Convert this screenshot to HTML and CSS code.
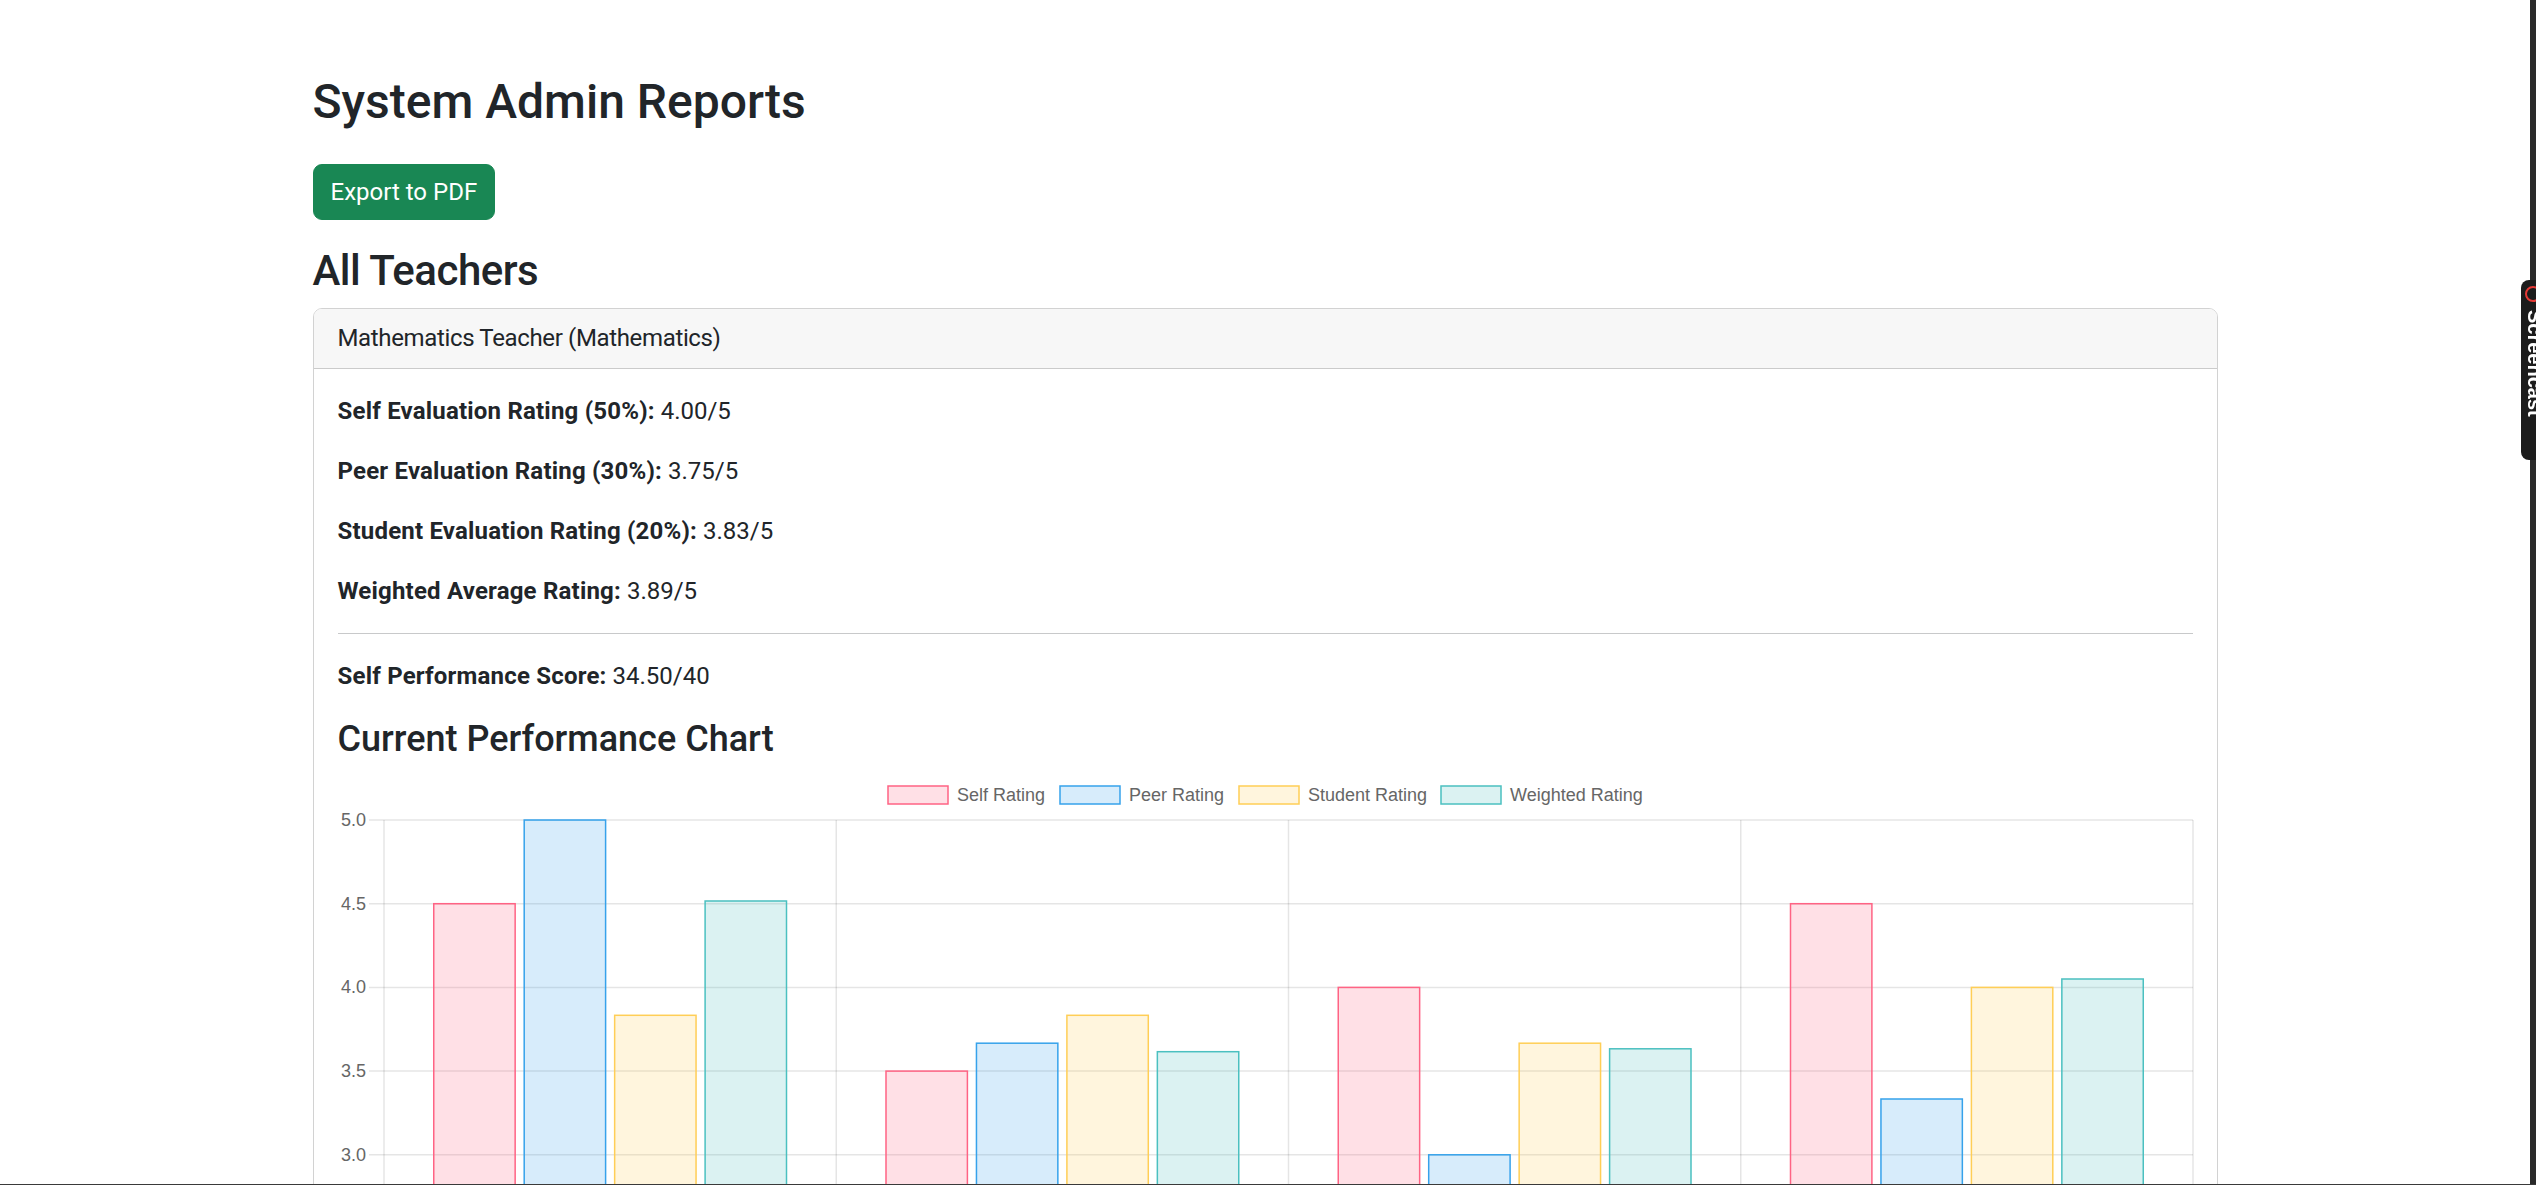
FILE: index.html
```html
<!DOCTYPE html>
<html lang="en">
<head>
<meta charset="utf-8">
<title>System Admin Reports</title>
<link rel="stylesheet" href="styles.css">
</head>
<body>
<div class="page">
  <div class="container">
    <h2 class="title">System Admin Reports</h2>
    <button class="btn-export" type="button">Export to PDF</button>
    <h3 class="section-title">All Teachers</h3>
    <div class="card">
      <div class="card-header">Mathematics Teacher (Mathematics)</div>
      <div class="card-body">
        <p><strong>Self Evaluation Rating (50%):</strong> 4.00/5</p>
        <p><strong>Peer Evaluation Rating (30%):</strong> 3.75/5</p>
        <p><strong>Student Evaluation Rating (20%):</strong> 3.83/5</p>
        <p><strong>Weighted Average Rating:</strong> 3.89/5</p>
        <hr class="divider">
        <p><strong>Self Performance Score:</strong> 34.50/40</p>
        <h4 class="chart-title">Current Performance Chart</h4>
        <div class="chart-wrap">
          <svg class="chart" width="1857" height="420" viewBox="0 0 1857 420" xmlns="http://www.w3.org/2000/svg">
            <g class="legend">
              <rect x="550" y="15" width="60" height="18" fill="rgba(255,99,132,0.2)" stroke="rgb(255,99,132)" stroke-width="1.5"/>
              <text x="619" y="24">Self Rating</text>
              <rect x="722" y="15" width="60" height="18" fill="rgba(54,162,235,0.2)" stroke="rgb(54,162,235)" stroke-width="1.5"/>
              <text x="791" y="24">Peer Rating</text>
              <rect x="901" y="15" width="60" height="18" fill="rgba(255,206,86,0.2)" stroke="rgb(255,206,86)" stroke-width="1.5"/>
              <text x="970" y="24">Student Rating</text>
              <rect x="1103" y="15" width="60" height="18" fill="rgba(75,192,192,0.2)" stroke="rgb(75,192,192)" stroke-width="1.5"/>
              <text x="1172" y="24">Weighted Rating</text>
            </g>
            <g class="grid" stroke="rgba(0,0,0,0.1)" stroke-width="1.5">
              <line x1="31" y1="49" x2="1855" y2="49"/>
              <line x1="31" y1="132.7" x2="1855" y2="132.7"/>
              <line x1="31" y1="216.4" x2="1855" y2="216.4"/>
              <line x1="31" y1="300.1" x2="1855" y2="300.1"/>
              <line x1="31" y1="383.8" x2="1855" y2="383.8"/>
              <line x1="46" y1="49" x2="46" y2="420"/>
              <line x1="498.25" y1="49" x2="498.25" y2="420"/>
              <line x1="950.5" y1="49" x2="950.5" y2="420"/>
              <line x1="1402.75" y1="49" x2="1402.75" y2="420"/>
              <line x1="1855" y1="49" x2="1855" y2="420"/>
            </g>
            <g class="ticks">
              <text x="28" y="49">5.0</text>
              <text x="28" y="132.7">4.5</text>
              <text x="28" y="216.4">4.0</text>
              <text x="28" y="300.1">3.5</text>
              <text x="28" y="383.8">3.0</text>
            </g>
            <g class="bars" stroke-width="1.5">
              <rect x="95.75" y="132.7" width="81.4" height="753.3" fill="rgba(255,99,132,0.2)" stroke="rgb(255,99,132)"/>
              <rect x="186.2" y="49" width="81.4" height="837" fill="rgba(54,162,235,0.2)" stroke="rgb(54,162,235)"/>
              <rect x="276.65" y="244.3" width="81.4" height="641.7" fill="rgba(255,206,86,0.2)" stroke="rgb(255,206,86)"/>
              <rect x="367.1" y="130" width="81.4" height="756" fill="rgba(75,192,192,0.2)" stroke="rgb(75,192,192)"/>

              <rect x="548" y="300.1" width="81.4" height="585.9" fill="rgba(255,99,132,0.2)" stroke="rgb(255,99,132)"/>
              <rect x="638.45" y="272.2" width="81.4" height="613.8" fill="rgba(54,162,235,0.2)" stroke="rgb(54,162,235)"/>
              <rect x="728.9" y="244.3" width="81.4" height="641.7" fill="rgba(255,206,86,0.2)" stroke="rgb(255,206,86)"/>
              <rect x="819.35" y="280.7" width="81.4" height="605.3" fill="rgba(75,192,192,0.2)" stroke="rgb(75,192,192)"/>

              <rect x="1000.25" y="216.4" width="81.4" height="669.6" fill="rgba(255,99,132,0.2)" stroke="rgb(255,99,132)"/>
              <rect x="1090.7" y="383.8" width="81.4" height="502.2" fill="rgba(54,162,235,0.2)" stroke="rgb(54,162,235)"/>
              <rect x="1181.15" y="272.2" width="81.4" height="613.8" fill="rgba(255,206,86,0.2)" stroke="rgb(255,206,86)"/>
              <rect x="1271.6" y="277.8" width="81.4" height="608.2" fill="rgba(75,192,192,0.2)" stroke="rgb(75,192,192)"/>

              <rect x="1452.5" y="132.7" width="81.4" height="753.3" fill="rgba(255,99,132,0.2)" stroke="rgb(255,99,132)"/>
              <rect x="1542.95" y="328" width="81.4" height="558" fill="rgba(54,162,235,0.2)" stroke="rgb(54,162,235)"/>
              <rect x="1633.4" y="216.4" width="81.4" height="669.6" fill="rgba(255,206,86,0.2)" stroke="rgb(255,206,86)"/>
              <rect x="1723.85" y="208" width="81.4" height="678" fill="rgba(75,192,192,0.2)" stroke="rgb(75,192,192)"/>
            </g>
          </svg>
        </div>
      </div>
    </div>
  </div>
</div>
<div class="edge-strip"></div>
<div class="side-tab">
  <span class="side-tab-icon"></span>
  <span class="side-tab-text">Screencast</span>
</div>
<div class="bottom-line"></div>
</body>
</html>
```

FILE: styles.css
```css
html, body {
  margin: 0;
  padding: 0;
  overflow: hidden;
  background: #ffffff;
}

body {
  font-family: Roboto, "Liberation Sans", sans-serif;
  color: #212529;
  font-size: 24px;
  line-height: 36px;
  height: 1185px;
}

.page {
  width: 2530px;
}

.container {
  width: 1905px;
  margin: 0 auto;
  padding-top: 73px;
}

.title {
  font-size: 48px;
  font-weight: 500;
  line-height: 1.2;
  margin: 0 0 33px 0;
}

.btn-export {
  display: inline-block;
  font-family: Roboto, "Liberation Sans", sans-serif;
  font-size: 24px;
  line-height: 36px;
  color: #ffffff;
  background: #198754;
  border: 1px solid #198754;
  border-radius: 9px;
  padding: 9px 17px;
  cursor: pointer;
}

.section-title {
  font-size: 42px;
  font-weight: 500;
  line-height: 1.2;
  letter-spacing: -0.5px;
  margin: 26px 0 12px 0;
}

.card {
  border: 1px solid rgba(0, 0, 0, 0.175);
  border-radius: 9px;
  overflow: hidden;
}

.card-header {
  background: #f7f7f7;
  border-bottom: 1px solid rgba(0, 0, 0, 0.175);
  padding: 11px 24px 12px 24px;
  line-height: 36px;
  letter-spacing: -0.35px;
}

.card-body {
  padding: 24px;
}

.card-body p {
  margin: 0 0 24px 0;
}

.card-body strong {
  font-weight: 700;
  letter-spacing: 0.2px;
}

.divider {
  margin: 24px 0;
  border: 0;
  border-top: 1px solid #c8c9ca;
  height: 0;
}

.chart-title {
  font-size: 36px;
  font-weight: 500;
  line-height: 1.2;
  margin: 0 0 10px 0;
}

.chart-wrap {
  width: 1857px;
}

.chart {
  display: block;
}

.chart text {
  font-family: "Liberation Sans", Arial, sans-serif;
  font-size: 18px;
  fill: #666666;
  dominant-baseline: central;
}

.ticks text {
  text-anchor: end;
}

.edge-strip {
  position: fixed;
  top: 0;
  right: 0;
  width: 6px;
  height: 1185px;
  background: #2a2a2a;
}

.side-tab {
  position: fixed;
  top: 280px;
  right: 0;
  width: 15px;
  height: 180px;
  background: #1c1c1c;
  border-radius: 8px 0 0 8px;
  overflow: hidden;
}

.side-tab-icon {
  position: absolute;
  top: 6px;
  left: 4px;
  width: 16px;
  height: 16px;
  border: 2px solid #e53935;
  border-radius: 50%;
  box-sizing: border-box;
}

.side-tab-text {
  position: absolute;
  top: 30px;
  left: 4px;
  writing-mode: vertical-rl;
  color: #ffffff;
  font-family: "Liberation Sans", sans-serif;
  font-size: 20px;
  line-height: 20px;
  font-weight: 700;
}

.bottom-line {
  position: fixed;
  left: 0;
  bottom: 0;
  width: 100%;
  height: 1px;
  background: #3a3a3a;
}
```
